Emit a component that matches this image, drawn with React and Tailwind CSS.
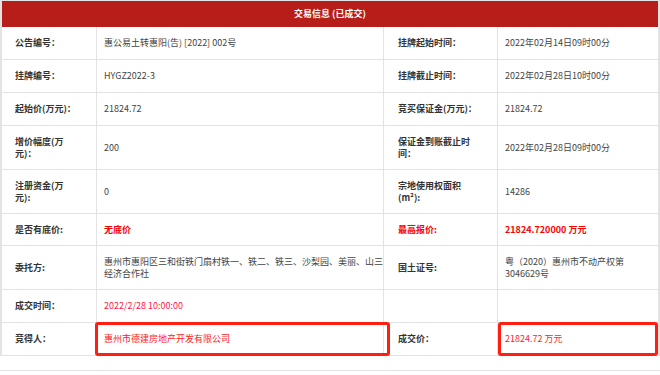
import React from 'react';

const rows = [
  {
    h: 'h-[33px]',
    l1: '公告编号：',
    v1: '惠公易土转惠阳(告) [2022] 002号',
    l2: '挂牌起始时间：',
    v2: '2022年02月14日09时00分',
  },
  {
    h: 'h-[33px]',
    l1: '挂牌编号：',
    v1: 'HYGZ2022-3',
    l2: '挂牌截止时间：',
    v2: '2022年02月28日10时00分',
  },
  {
    h: 'h-[33px]',
    l1: '起始价(万元)：',
    v1: '21824.72',
    l2: '竞买保证金(万元)：',
    v2: '21824.72',
  },
  {
    h: 'h-[44px]',
    l1: <>增价幅度(万<br />元)：</>,
    v1: '200',
    l2: <>保证金到账截止时<br />间：</>,
    v2: '2022年02月28日09时00分',
  },
  {
    h: 'h-[44px]',
    l1: <>注册资金(万<br />元):</>,
    v1: '0',
    l2: <>宗地使用权面积<br />(m²):</>,
    v2: '14286',
  },
  {
    h: 'h-[32px]',
    l1: '是否有底价:',
    v1: <span className="font-bold text-[#ff0000]">无底价</span>,
    l2: <span className="text-[#ff0000]">最高报价:</span>,
    v2: <span className="font-bold text-[#ff0000]">21824.720000 万元</span>,
  },
  {
    h: 'h-[44px]',
    l1: '委托方:',
    v1: <>惠州市惠阳区三和街铁门扇村铁一、铁二、铁三、沙梨园、美丽、山三<br />经济合作社</>,
    l2: '国土证号:',
    v2: <>粤（2020）惠州市不动产权第<br />3046629号</>,
  },
  {
    h: 'h-[33px]',
    l1: '成交时间：',
    v1: <span className="text-[#ff1744]">2022/2/28 10:00:00</span>,
    l2: '',
    v2: '',
  },
  {
    h: 'h-[33px]',
    l1: '竞得人：',
    v1: <span className="text-[#ff1a1a]">惠州市德建房地产开发有限公司</span>,
    l2: '成交价：',
    v2: <span className="text-[#ff1a1a]">21824.72 万元</span>,
    boxed: true,
  },
];

const Row = ({ row }) => (
  <div className={`relative flex border-b border-[#e3e3e3] ${row.h}`}>
    <div className="flex w-[94px] shrink-0 items-center pl-[13px] font-bold leading-[12px] text-[#333]">
      {row.l1}
    </div>
    <div className="flex w-[287px] shrink-0 items-center border-l border-[#e3e3e3] pl-[7px] leading-[12px] text-[#444]">
      {row.v1}
    </div>
    <div className="flex w-[114px] shrink-0 items-center border-l border-[#e3e3e3] pl-[14px] font-bold leading-[12px] text-[#333]">
      {row.l2}
    </div>
    <div className="flex w-[161px] shrink-0 items-center border-l border-[#e3e3e3] pl-[7px] leading-[12px] text-[#444]">
      {row.v2}
    </div>
    {row.boxed && (
      <>
        <div className="absolute -top-[1px] left-[93px] h-[34px] w-[295px] rounded-[3px] border-[3px] border-[#ff1e12]"></div>
        <div className="absolute -top-[1px] left-[496px] h-[34px] w-[160px] rounded-[3px] border-[3px] border-[#ff1e12]"></div>
      </>
    )}
  </div>
);

const App = () => {
  return (
    <div className="h-[375px] w-[660px] bg-white text-[9px] font-['Noto_Sans_CJK_SC','Noto_Sans',sans-serif]">
      <div className="border-b border-[#e3e3e3]">
        <div className="border-t border-l-2 border-r-2 border-[#e3e3e3]">
          <div className="flex h-[26px] items-center justify-center bg-[#b71e1a] font-bold text-white">
            交易信息 (已成交)
          </div>
          {rows.map((row, i) => (
            <Row key={i} row={row} />
          ))}
        </div>
        <div className="h-[14px]"></div>
      </div>
    </div>
  );
};

export default App;
